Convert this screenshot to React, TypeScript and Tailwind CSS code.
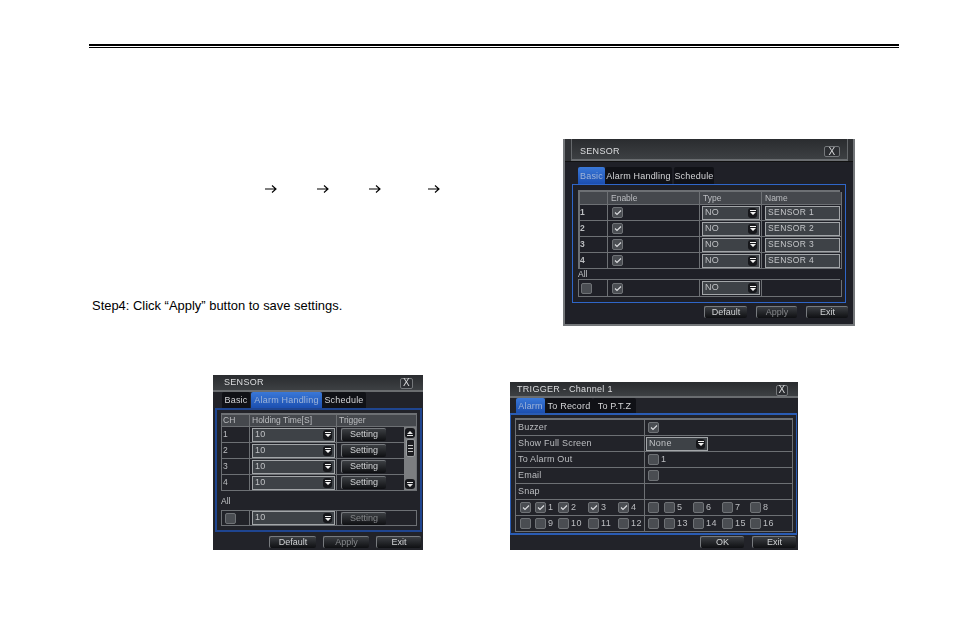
import type {ReactNode} from "react";
import clsx from "clsx";

const line = "border-[#6d7074]";

function Check({on = false}: {on?: boolean}) {
  return (
    <span className="flex h-[11px] w-[11px] shrink-0 items-center justify-center rounded-[2px] border border-[#6f7276] bg-[#4a4d52]">
      {on && (
        <svg width="8" height="7" viewBox="0 0 8 7" fill="none">
          <path d="M1 3.5 3 5.5 7 1.5" stroke="#dcdde0" strokeWidth="1.1" />
        </svg>
      )}
    </span>
  );
}

function Select({value, className}: {value: string; className: string}) {
  return (
    <div className={clsx("flex h-[14px] items-center justify-between border border-[#a3a6a9] bg-[#3e4247] pl-[2px] pr-[2px] text-[9px] tracking-[0.3px] text-[#bfc1c4]", className)}>
      <span>{value}</span>
      <span className="flex h-[10px] w-[9px] items-center justify-center rounded-[3px] bg-[#16171b]">
        <svg width="6" height="5" viewBox="0 0 6 5">
          <path d="M0 0H6V1H0ZM0 2H6L3 5Z" fill="#f2f2f2" />
        </svg>
      </span>
    </div>
  );
}

function Btn({label, className, dim = false}: {label: string; className: string; dim?: boolean}) {
  return (
    <div
      className={clsx(
        "flex h-[12px] items-center justify-center rounded-[2px] border-t border-l border-[#777a7e] bg-gradient-to-b from-[#3c3f43] to-[#0f1013] text-[9px]",
        dim ? "text-[#85878a]" : "text-[#d0d2d4]",
        className,
      )}>
      {label}
    </div>
  );
}

function Title({title, className, closeW}: {title: string; className: string; closeW: string}) {
  return (
    <div className={clsx("flex items-center justify-between border-b-2 border-[#6a6d70] bg-gradient-to-b from-[#2a2c2f] to-[#3d4043] text-[9px] tracking-[0.3px] text-[#dcdddf]", className)}>
      <span>{title}</span>
      <span className={clsx("flex h-[11px] items-center justify-center rounded-[2px] border border-[#75787b] bg-[#2c2e32] text-[10px] leading-none text-[#d8d9da]", closeW)}>
        X
      </span>
    </div>
  );
}

function Tabs({items, className}: {items: {label: string; w: string; on?: boolean}[]; className: string}) {
  return (
    <div className={clsx("flex items-end", className)}>
      {items.map((t) => (
        <div
          key={t.label}
          className={clsx(
            "flex h-full items-center justify-center rounded-t-[2px] pt-[2px] text-[9px] tracking-[0.2px]",
            t.w,
            t.on ? "bg-gradient-to-b from-[#3a78d8] to-[#1c4fb0] text-[#9fb4d8]" : "bg-[#101116] text-[#d4d5d7]",
          )}>
          {t.label}
        </div>
      ))}
    </div>
  );
}

function Cell({children, className}: {children?: ReactNode; className?: string}) {
  return (
    <div className={clsx("flex items-center overflow-hidden border-r border-b text-[8.5px] text-[#bcbec1]", line, className)}>
      {children}
    </div>
  );
}

function SensorDialog() {
  const rows = [1, 2, 3, 4];
  return (
    <div className="h-[187px] w-[292px] shrink-0 border-x-2 border-b-2 border-[#74777a] bg-[#1f2027] blur-[0.35px]">
      <div className="border-b border-[#111] bg-[#303235] pl-[6px] pr-[5px]">
        <Title title="SENSOR" closeW="w-[16px]" className="h-[22px] border-x border-x-[#66696c] pl-[8px] pr-[7px] pt-[5px]" />
      </div>
      <Tabs
        className="ml-[13px] mt-[5px] h-[17px]"
        items={[
          {label: "Basic", w: "w-[27px]", on: true},
          {label: "Alarm Handling", w: "w-[67px]"},
          {label: "Schedule", w: "w-[40px] ml-[2px]"},
        ]}
      />
      <div className="mx-[7px] border border-[#2f66c8] px-[5px] pt-[5px] pb-[5px]">
        <div className={clsx("grid grid-cols-[28px_92px_62px_80px] grid-rows-[13px_16px_16px_16px_16px] border-t-2 border-l-2", line)}>
          <Cell className="bg-[#45484d]" />
          <Cell className="bg-[#45484d] pl-[3px]">Enable</Cell>
          <Cell className="bg-[#45484d] pl-[3px]">Type</Cell>
          <Cell className="bg-[#45484d] pl-[3px]">Name</Cell>
          {rows.map((n) => (
            <div key={n} className="contents">
              <Cell className="font-bold">{n}</Cell>
              <Cell className="pl-[4px]">
                <Check on />
              </Cell>
              <Cell className="pl-[2px]">
                <Select value="NO" className="w-[58px]" />
              </Cell>
              <Cell className="pl-[3px]">
                <div className="flex h-[14px] w-[75px] items-center border border-[#a3a6a9] bg-[#3e4247] pl-[2px] tracking-[0.4px] text-[#c4c6c9]">
                  SENSOR {n}
                </div>
              </Cell>
            </div>
          ))}
        </div>
        <div className="h-[10px] text-[8.5px] leading-[11px] text-[#c4c6c9]">All</div>
        <div className={clsx("grid h-[18px] grid-cols-[29px_92px_62px_80px] border-t border-l", line)}>
          <Cell className="pl-[2px]">
            <Check />
          </Cell>
          <Cell className="pl-[4px]">
            <Check on />
          </Cell>
          <Cell className="pl-[2px]">
            <Select value="NO" className="w-[58px]" />
          </Cell>
          <Cell />
        </div>
      </div>
      <div className="mt-[3px] flex justify-end gap-[9px] pr-[5px]">
        <Btn label="Default" className="w-[43px]" />
        <Btn label="Apply" dim className="w-[41px]" />
        <Btn label="Exit" className="w-[42px]" />
      </div>
    </div>
  );
}

function Scrollbar() {
  return (
    <div className={clsx("flex w-[13px] flex-col items-center border-r border-b bg-[#7c7e81] pt-[1px]", line)}>
      <span className="flex h-[10px] w-[10px] items-center justify-center rounded-[3px] bg-[#17181c]">
        <svg width="6" height="5" viewBox="0 0 6 5">
          <path d="M3 0 6 3H0ZM0 4H6V5H0Z" fill="#e6e6e6" />
        </svg>
      </span>
      <span className="mt-[1px] flex h-[18px] w-[9px] flex-col justify-center gap-[2px] rounded-[2px] border border-[#9b9ea1] bg-[#1d1e22] px-[1px]">
        <i className="block h-px bg-[#c8c8c8]" />
        <i className="block h-px bg-[#c8c8c8]" />
        <i className="block h-px bg-[#c8c8c8]" />
      </span>
      <span className="mt-auto mb-[1px] flex h-[10px] w-[10px] items-center justify-center rounded-[3px] bg-[#17181c]">
        <svg width="6" height="5" viewBox="0 0 6 5">
          <path d="M0 0H6V1H0ZM0 2H6L3 5Z" fill="#e6e6e6" />
        </svg>
      </span>
    </div>
  );
}

function HandlingDialog() {
  const rows = [1, 2, 3, 4];
  return (
    <div className="h-[175px] w-[210px] shrink-0 bg-[#222329] blur-[0.35px]">
      <Title title="SENSOR" closeW="w-[13px]" className="h-[17px] pl-[11px] pr-[10px] pt-[1px]" />
      <Tabs
        className="ml-[9px] h-[16px]"
        items={[
          {label: "Basic", w: "w-[28px]"},
          {label: "Alarm Handling", w: "w-[71px] ml-[1px]", on: true},
          {label: "Schedule", w: "w-[44px]"},
        ]}
      />
      <div className="ml-[2px] w-[207px] border-2 border-[#1f4590] px-[4px] pt-[3px]">
        <div className={clsx("h-[78px] w-[196px] border-t-2 border-l", line)}>
          <div className="grid h-[12px] grid-cols-[28px_87px_1fr]">
            <Cell className="bg-[#45484d] pl-[1px]">CH</Cell>
            <Cell className="bg-[#45484d] pl-[2px]">Holding Time[S]</Cell>
            <Cell className="bg-[#45484d] pl-[2px]">Trigger</Cell>
          </div>
          <div className="flex h-[64px]">
            <div className="grid w-[182px] grid-cols-[28px_87px_67px] grid-rows-4">
              {rows.map((n) => (
                <div key={n} className="contents">
                  <Cell className="pl-[1px]">{n}</Cell>
                  <Cell className="pl-[2px]">
                    <Select value="10" className="w-[83px]" />
                  </Cell>
                  <Cell className="border-r-0 pl-[4px]">
                    <Btn label="Setting" className="!h-[13px] w-[45px]" />
                  </Cell>
                </div>
              ))}
            </div>
            <Scrollbar />
          </div>
        </div>
        <div className="h-[19px] text-[8.5px] leading-[20px] text-[#c4c6c9]">All</div>
        <div className={clsx("grid h-[16px] w-[196px] grid-cols-[28px_87px_1fr] border-t border-l", line)}>
          <Cell className="pl-[3px]">
            <Check />
          </Cell>
          <Cell className="pl-[2px]">
            <Select value="10" className="w-[83px]" />
          </Cell>
          <Cell className="pl-[4px]">
            <Btn label="Setting" dim className="!h-[13px] w-[45px]" />
          </Cell>
        </div>
        <div className="h-[4px]" />
      </div>
      <div className="mt-[4px] flex justify-end gap-[7px] pr-[2px]">
        <Btn label="Default" className="w-[47px]" />
        <Btn label="Apply" dim className="w-[46px]" />
        <Btn label="Exit" className="w-[45px]" />
      </div>
    </div>
  );
}

const snapLeft = [
  {text: "", w: "w-[15px]", on: true},
  {text: "1", w: "w-[23px]", on: true},
  {text: "2", w: "w-[30px]", on: true},
  {text: "3", w: "w-[30px]", on: true},
  {text: "4", w: "w-[26px]", on: true},
];
const snapLeft2 = [
  {text: "", w: "w-[15px]"},
  {text: "9", w: "w-[23px]"},
  {text: "10", w: "w-[30px]"},
  {text: "11", w: "w-[30px]"},
  {text: "12", w: "w-[26px]"},
];
const snapRight = [
  {text: "", w: "w-[16px]"},
  {text: "5", w: "w-[29px]"},
  {text: "6", w: "w-[29px]"},
  {text: "7", w: "w-[28px]"},
  {text: "8", w: "w-[26px]"},
];
const snapRight2 = [
  {text: "", w: "w-[16px]"},
  {text: "13", w: "w-[29px]"},
  {text: "14", w: "w-[29px]"},
  {text: "15", w: "w-[28px]"},
  {text: "16", w: "w-[26px]"},
];

function Snap({items, pad}: {items: {text: string; w: string; on?: boolean}[]; pad: string}) {
  return (
    <Cell className={clsx("text-[9px] tracking-[0.4px]", pad)}>
      {items.map((it, i) => (
        <div key={i} className={clsx("flex shrink-0 items-center gap-[2px]", it.w)}>
          <Check on={it.on} />
          {it.text}
        </div>
      ))}
    </Cell>
  );
}

function TriggerDialog() {
  const label = "pl-[2px] text-[9px] tracking-[0.2px]";
  return (
    <div className="mt-[7px] h-[168px] w-[288px] shrink-0 bg-[#222329] blur-[0.35px]">
      <Title title="TRIGGER - Channel 1" closeW="w-[12px]" className="h-[16px] pl-[7px] pr-[10px] pt-[2px]" />
      <Tabs
        className="ml-[6px] h-[15px]"
        items={[
          {label: "Alarm", w: "w-[29px]", on: true},
          {label: "To Record", w: "w-[48px]"},
          {label: "To P.T.Z", w: "w-[43px]"},
        ]}
      />
      <div className="w-[287px] border-x border-y-2 border-[#2a5cb4] px-[4px] pt-[3px] pb-[1px]">
        <div className={clsx("grid h-[114px] w-[278px] grid-cols-[129px_148px] grid-rows-7 border-t-2 border-l", line)}>
          <Cell className={label}>Buzzer</Cell>
          <Cell className="pl-[3px]">
            <Check on />
          </Cell>
          <Cell className={label}>Show Full Screen</Cell>
          <Cell className="pl-[1px]">
            <Select value="None" className="w-[62px]" />
          </Cell>
          <Cell className={label}>To Alarm Out</Cell>
          <Cell className="gap-[2px] pl-[3px] text-[9px]">
            <Check />1
          </Cell>
          <Cell className={label}>Email</Cell>
          <Cell className="pl-[3px]">
            <Check />
          </Cell>
          <Cell className={label}>Snap</Cell>
          <Cell />
          <Snap items={snapLeft} pad="pl-[4px]" />
          <Snap items={snapRight} pad="pl-[3px]" />
          <Snap items={snapLeft2} pad="pl-[4px]" />
          <Snap items={snapRight2} pad="pl-[3px]" />
        </div>
      </div>
      <div className="mt-[1px] flex justify-end gap-[8px] pr-[2px]">
        <Btn label="OK" className="w-[44px]" />
        <Btn label="Exit" className="w-[44px]" />
      </div>
    </div>
  );
}

function Arrow({className}: {className: string}) {
  return (
    <svg className={className} width="12" height="10" viewBox="0 0 12 10" fill="none">
      <path d="M0 5H11M7 1.5 11 5 7 8.5" stroke="#000" strokeWidth="1.15" />
    </svg>
  );
}

export default function App() {
  return (
    <div className="h-[636px] w-[954px] overflow-hidden bg-white font-['Liberation_Sans',Arial,sans-serif]">
      <div className="ml-[89px] mt-[44px] h-[4px] w-[810px] border-t-2 border-b border-black" />

      <div className="mt-[91px] flex">
        <div className="w-[563px] shrink-0 pl-[92px]">
          <div className="mt-[45px] flex pl-[173px]">
            <Arrow className="" />
            <Arrow className="ml-[40px]" />
            <Arrow className="ml-[40px]" />
            <Arrow className="ml-[47px]" />
          </div>
          <p className="mt-[104px] text-[12.95px] leading-[15px] text-black">Step4: Click “Apply” button to save settings.</p>
        </div>
        <SensorDialog />
      </div>

      <div className="ml-[213px] mt-[49px] flex items-start gap-[87px]">
        <HandlingDialog />
        <TriggerDialog />
      </div>
    </div>
  );
}
